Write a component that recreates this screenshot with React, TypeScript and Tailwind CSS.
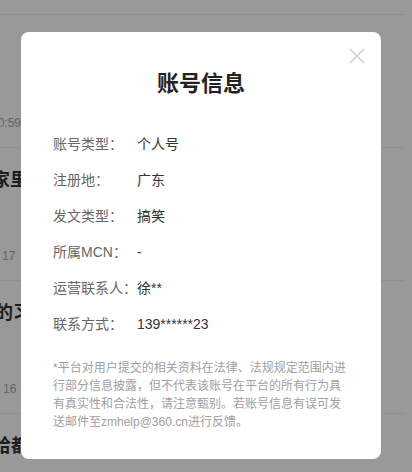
// AccountInfoModal - 账号信息弹窗
const font = { fontFamily: '"Liberation Sans", "Noto Sans CJK SC", sans-serif' };

const feed = [
  { title: "", titleClass: "ml-[30px]", meta: "10:59", metaClass: "ml-[-9px]" },
  { title: "家里的猫咪又闯祸了", titleClass: "ml-[-8px]", meta: "17", metaClass: "ml-[2px]" },
  { title: "的习惯你有吗", titleClass: "ml-[-5px]", meta: "16", metaClass: "ml-[3px]" },
  { title: "给都市里的你", titleClass: "ml-[-7px]", meta: "", metaClass: "" },
];

const rows = [
  { label: "账号类型：", value: "个人号" },
  { label: "注册地：", value: "广东" },
  { label: "发文类型：", value: "搞笑" },
  { label: "所属MCN：", value: "-" },
  { label: "运营联系人：", value: "徐**" },
  { label: "联系方式：", value: "139******23" },
];

const notice = [
  "*平台对用户提交的相关资料在法律、法规规定范围内进",
  "行部分信息披露，但不代表该账号在平台的所有行为具",
  "有真实性和合法性，请注意甄别。若账号信息有误可发",
  "送邮件至zmhelp@360.cn进行反馈。",
];

function FeedItem({ item }: { item: (typeof feed)[number] }) {
  return (
    <div className="h-[133px] shrink-0 border-b border-[#eeeeee] overflow-hidden">
      <div className={`mt-[20px] h-[24px] whitespace-nowrap text-[18px] font-bold leading-[24px] text-[#333] ${item.titleClass}`}>
        {item.title}
      </div>
      <div className={`mt-[56px] h-[16px] whitespace-nowrap text-[12px] leading-[16px] text-[#a8a8a8] ${item.metaClass}`}>
        {item.meta}
      </div>
    </div>
  );
}

export default function App() {
  return (
    <div className="relative h-[472px] w-[412px] overflow-hidden bg-white" style={font}>
      {/* page behind the mask */}
      <div className="flex flex-col pr-[7px]">
        <div className="h-[15px] shrink-0 border-b border-[#eeeeee]" />
        {feed.map((item, i) => (
          <FeedItem key={i} item={item} />
        ))}
      </div>

      {/* mask */}
      <div className="absolute inset-0 bg-black/40 pl-[21px] pt-[32px]">
        <div className="relative flex h-[427px] w-[360px] flex-col rounded-lg bg-white px-8 pt-[37px]">
          <button className="absolute right-4 top-4 h-4 w-4" aria-label="close">
            <svg viewBox="0 0 16 16" width="16" height="16" fill="none" stroke="#d0d0d0" strokeWidth="1.6">
              <path d="M1 1L15 15M15 1L1 15" />
            </svg>
          </button>

          <h2 className="text-center text-[22px] font-bold leading-[30px] text-[#222]">账号信息</h2>

          <div className="mt-[27px] flex flex-col">
            {rows.map((row) => (
              <div key={row.label} className="flex h-9 items-center text-[14px]">
                <span className="w-[84px] shrink-0 text-[#666]">{row.label}</span>
                <span className="text-[#333]">{row.value}</span>
              </div>
            ))}
          </div>

          <p className="mt-[17px] text-[12px] leading-[18px] text-[#a0a0a0]">
            {notice.map((line) => (
              <span key={line} className="block whitespace-nowrap">
                {line}
              </span>
            ))}
          </p>
        </div>
      </div>
    </div>
  );
}
